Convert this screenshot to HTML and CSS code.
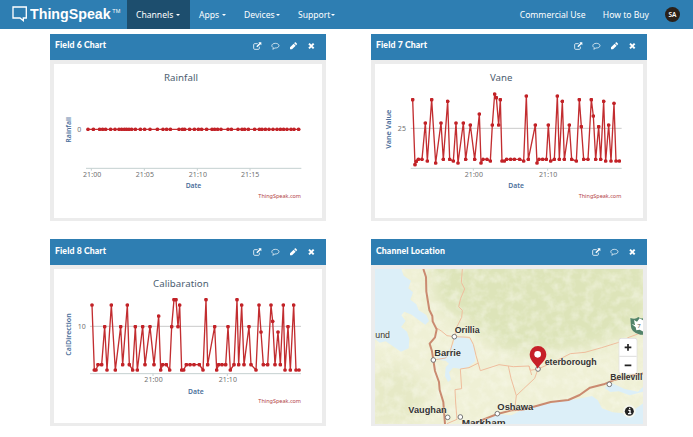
FILE: index.html
```html
<!DOCTYPE html>
<html lang="en">
<head>
<meta charset="utf-8">
<title>ThingSpeak</title>
<link rel="stylesheet" href="styles.css">
</head>
<body>
<svg class="defs" width="0" height="0" aria-hidden="true">
  <symbol id="i-open" viewBox="0 0 27 24"><path d="M14 5H5Q2 5 2 8V19Q2 22 5 22H16Q19 22 19 19V14" fill="none" stroke="#fff" stroke-width="2.4"/><path d="M16 1H25V10L22 7L13 16L10 13L19 4Z" fill="#fff"/></symbol>
  <symbol id="i-talk" viewBox="0 0 27 24"><path d="M13 4C7 4 2.500 7 2.500 11C2.500 13.500 4 15.500 7 17C7 19 6 20.500 5 21.500C8 21 10 20 11.500 18C18 18.500 24 15.500 24 11C24 7 19 4 13 4Z" fill="none" stroke="#fff" stroke-width="2.2"/></symbol>
  <symbol id="i-edit" viewBox="0 0 27 24"><path d="M3 22V16L14 5L20 11L9 22ZM15.500 3.500L18 1Q19 0 20 1L24 5Q25 6 24 7L21.500 9.500Z" fill="#fff"/></symbol>
  <symbol id="i-close" viewBox="0 0 27 24"><path d="M6 5L20 19M20 5L6 19" stroke="#fff" stroke-width="6"/></symbol>
  <marker id="dot" markerUnits="userSpaceOnUse" markerWidth="12" markerHeight="12" refX="6" refY="6"><circle cx="6" cy="6" r="5.600" fill="#c22227"/></marker>
</svg>

<nav class="navbar">
  <a class="brand">
    <svg class="brand-icon" viewBox="0 0 46 48"><path d="M3 3H43V36H34V44L24 36H3Z" fill="none" stroke="#fff" stroke-width="4"/></svg>
    <svg class="brand-word" viewBox="0 0 272 60"><text x="0" y="41" textLength="242" lengthAdjust="spacingAndGlyphs">ThingSpeak</text><text class="tm" x="247" y="24" textLength="24" lengthAdjust="spacingAndGlyphs">TM</text></svg>
  </a>
  <div class="menu">
    <a class="item active">Channels<i class="caret"></i></a>
    <a class="item apps">Apps<i class="caret"></i></a>
    <a class="item devices">Devices<i class="caret"></i></a>
    <a class="item support">Support<i class="caret"></i></a>
  </div>
  <div class="account">
    <a class="commercial">Commercial Use</a>
    <a class="buy">How to Buy</a>
    <span class="avatar">SA</span>
  </div>
</nav>

<main class="grid">
  <section class="panel">
    <header><h2>Field 6 Chart</h2><div class="tools"><svg><use href="#i-open"/></svg><svg><use href="#i-talk"/></svg><svg><use href="#i-edit"/></svg><svg><use href="#i-close"/></svg></div></header>
    <svg class="chart" viewBox="27 102 804 462">
      <text class="title" x="357" y="154" textLength="102">Rainfall</text>
      <text class="axis" transform="translate(77 338) rotate(-90)" textLength="77" lengthAdjust="spacingAndGlyphs">Rainfall</text>
      <text class="tick" x="97" y="305">0</text>
      <path class="line-axis" d="M123 415H769M139 415V422M298 415V422M457 415V422M615 415V422"/>
      <polyline class="data" points="129,298 145,298 164,298 173,298 182,298 197,298 210,298 222,298 230,298 238,298 245,298 252,298 260,298 271,298 286,298 299,298 315,298 337,298 354,298 365,298 376,298 402,298 412,298 419,298 434,298 448,298 460,298 470,298 485,298 501,298 509,298 518,298 528,298 549,298 559,298 579,298 591,298 599,298 610,298 629,298 643,298 651,298 661,298 672,298 684,298 696,298 706,298 716,298 726,298 738,298 747,298 761,298"/>
      <text class="tick" x="114" y="440" textLength="55">21:00</text><text class="tick" x="272" y="440" textLength="55">21:05</text><text class="tick" x="431" y="440" textLength="55">21:10</text><text class="tick" x="588" y="440" textLength="55">21:15</text>
      <text class="axis" x="422" y="475" textLength="47" lengthAdjust="spacingAndGlyphs">Date</text>
      <text class="credit" x="640" y="504" textLength="128" lengthAdjust="spacingAndGlyphs">ThingSpeak.com</text>
    </svg>
  </section>

  <section class="panel">
    <header><h2>Field 7 Chart</h2><div class="tools"><svg><use href="#i-open"/></svg><svg><use href="#i-talk"/></svg><svg><use href="#i-edit"/></svg><svg><use href="#i-close"/></svg></div></header>
    <svg class="chart" viewBox="30 102 804 462">
      <text class="title" x="375" y="154" textLength="67">Vane</text>
      <text class="axis" transform="translate(79 356) rotate(-90)" textLength="117" lengthAdjust="spacingAndGlyphs">Vane Value</text>
      <text class="tick" x="98" y="303" textLength="25">25</text>
      <path class="line-grid" d="M137 295H770"/>
      <path class="line-axis" d="M137 415H770M325 415V422M548 415V422"/>
      <polyline class="data" points="143,209 150,404 154,394 160,388 171,388 181,279 187,393 200,209 212,399 228,279 235,388 248,214 254,388 265,393 273,279 279,399 295,279 302,388 316,285 329,388 343,252 348,399 354,388 366,388 376,393 382,285 389,192 394,203 401,285 406,209 411,393 418,393 425,388 437,388 448,388 464,388 476,393 484,198 490,388 511,285 516,399 522,388 533,388 544,388 550,285 557,393 568,388 577,198 583,388 592,214 598,388 613,285 620,388 634,393 643,209 649,290 656,388 669,388 679,209 685,258 692,388 701,290 707,388 716,214 722,393 731,285 738,393 747,220 753,393 763,393"/>
      <text class="tick" x="299" y="440" textLength="55">21:00</text><text class="tick" x="522" y="440" textLength="55">21:10</text>
      <text class="axis" x="430" y="475" textLength="47" lengthAdjust="spacingAndGlyphs">Date</text>
      <text class="credit" x="641" y="504" textLength="128" lengthAdjust="spacingAndGlyphs">ThingSpeak.com</text>
    </svg>
  </section>

  <section class="panel lower">
    <header><h2>Field 8 Chart</h2><div class="tools"><svg><use href="#i-open"/></svg><svg><use href="#i-talk"/></svg><svg><use href="#i-edit"/></svg><svg><use href="#i-close"/></svg></div></header>
    <svg class="chart" viewBox="27 102 804 462">
      <text class="title" x="324" y="156" textLength="167">Calibaration</text>
      <text class="axis" transform="translate(77 362) rotate(-90)" textLength="127" lengthAdjust="spacingAndGlyphs">CalDirection</text>
      <text class="tick" x="98" y="282" textLength="24">10</text>
      <path class="line-grid" d="M135 274H768"/>
      <path class="line-axis" d="M135 416H768M324 416V423M547 416V423"/>
      <polyline class="data" points="141,210 148,405 153,405 159,389 170,389 179,275 186,405 199,210 211,405 227,275 233,389 247,210 253,389 263,405 271,275 277,405 293,275 300,389 315,275 327,389 341,243 347,405 353,389 364,389 374,405 380,275 387,194 393,194 399,275 404,210 410,405 416,405 424,389 435,389 447,389 463,389 474,405 483,194 488,389 509,275 515,405 521,389 531,389 542,389 549,275 556,405 567,389 576,194 581,389 590,210 597,389 612,275 618,389 633,405 642,210 648,291 655,389 668,389 678,210 683,259 690,389 699,291 706,389 715,210 720,405 729,275 736,405 746,210 753,405 762,405"/>
      <text class="tick" x="298" y="441" textLength="55">21:00</text><text class="tick" x="521" y="441" textLength="55">21:10</text>
      <text class="axis" x="429" y="476" textLength="47" lengthAdjust="spacingAndGlyphs">Date</text>
      <text class="credit" x="640" y="505" textLength="128" lengthAdjust="spacingAndGlyphs">ThingSpeak.com</text>
    </svg>
  </section>

  <section class="panel lower">
    <header><h2>Channel Location</h2><div class="tools"><svg><use href="#i-open"/></svg><svg><use href="#i-talk"/></svg><svg><use href="#i-close"/></svg></div></header>
    <svg class="chart map" viewBox="30 102 804 465" preserveAspectRatio="none">
      <defs>
        <filter id="relief" x="0" y="0" width="100%" height="100%"><feTurbulence type="fractalNoise" baseFrequency="0.035" numOctaves="3" seed="8"/><feColorMatrix values="0 0 0 0 .96  0 0 0 0 .96  0 0 0 0 .87  2.200 0 0 0 -.850"/></filter>
        <filter id="soft" x="-20%" y="-20%" width="140%" height="140%"><feGaussianBlur stdDeviation="22"/></filter>
      </defs>
      <rect x="27" y="100" width="808" height="470" fill="#eff0d5"/>
      <path d="M190 60H850V270L700 330L560 350L420 350L330 280L220 210Z" fill="#dde4b9" filter="url(#soft)"/>
      <path d="M20 400L110 390L190 460L170 560L20 570Z" fill="#e6e9c6" filter="url(#soft)"/>
      <rect x="27" y="100" width="808" height="470" filter="url(#relief)" opacity=".45"/>
      <path class="water" d="M27 100H108L116 122L138 137L130 160L144 172L136 194L154 208L161 226L184 240L192 258L181 269L160 254L140 239L118 230L109 241L122 258L108 276L126 290L133 312L131 340L108 350L84 334L62 319L44 323L27 310Z"/>
      <path class="water" d="M267 310L290 304L317 314L329 342L331 379L309 397L285 401L264 398L252 412L258 434L249 441L240 424L242 397L252 386L242 377L225 375L215 367L247 358L255 340L267 325Z"/>
      <path class="water" d="M290 570L345 554L397 537L440 541L470 525L530 510L590 499L640 491L681 483L698 495L711 520L743 532L790 536L835 505V570Z"/>
      <path class="water" d="M740 444L779 462L819 470L835 455V470L794 481L761 469L736 471L719 459Z"/>
      <g class="minor"><path d="M292 102L289 142L299 162L287 190L281 215L292 226L290 247L276 275L268 305L246 302L229 288L215 279"/><path d="M268 305L314 307L325 328L333 361L346 407L402 389L445 395L492 393L496 406L519 402"/><path d="M340 384L312 398L286 402L290 461L270 464L272 504L276 553L246 566"/><path d="M205 375L242 369L256 347L268 305M430 393L438 430L454 482L449 524M454 482L475 462L509 430L519 402L571 379L616 356L660 352L710 338L758 323L794 306L835 291M492 393L500 420"/></g>
      <path class="major" d="M175 102L183 126L184 170L193 225L202 243L203 259L215 283L210 307L194 326L201 349L205 375L210 408L222 441L224 465L235 501L237 529L240 567"/>
      <path class="major" d="M327 567L354 554L397 537L440 526L472 524L517 512L557 501L610 495L644 480L675 458L716 448L750 434L790 424L835 415"/>
      <g class="town"><circle cx="268" cy="305" r="7"/><circle cx="205" cy="375" r="7"/><circle cx="248" cy="547" r="7"/><circle cx="286" cy="546" r="7"/><circle cx="397" cy="536" r="7"/><circle cx="519" cy="402" r="7"/><circle cx="733" cy="448" r="7"/></g>
      <g class="place"><text x="31" y="308" textLength="44" lengthAdjust="spacingAndGlyphs" class="light">und</text><text x="269" y="293" textLength="75" lengthAdjust="spacingAndGlyphs">Orillia</text><text x="208" y="363" textLength="80" lengthAdjust="spacingAndGlyphs">Barrie</text><text x="130" y="534" textLength="115" lengthAdjust="spacingAndGlyphs">Vaughan</text><text x="290" y="573" textLength="132" lengthAdjust="spacingAndGlyphs">Markham</text><text x="397" y="524" textLength="108" lengthAdjust="spacingAndGlyphs">Oshawa</text><text x="539" y="391" textLength="156" lengthAdjust="spacingAndGlyphs">eterborough</text></g>
      <path d="M796 249Q812 254 820 246Q828 254 842 247V296Q832 302 822 298Q800 292 798 276Z" fill="#52836a"/><path d="M800 267L810 270L807 255L816 260L824 250L836 257V291L824 284L814 286L812 277Z" fill="#fff"/><text x="817" y="280" class="route">7</text>
      <path d="M518 401C510 386 494 377 494 358A25 25 0 0 1 544 358C544 377 526 386 518 401Z" fill="#c61f28"/><circle cx="518" cy="358" r="10" fill="#fff"/>
      <rect x="761" y="309" width="56" height="109" rx="8" fill="#ddd"/><rect x="763" y="311" width="52" height="105" rx="6" fill="#fff"/><path d="M763 364H815" stroke="#ddd" stroke-width="3"/><path d="M779 337H799M789 327V347M779 391H799" stroke="#222" stroke-width="5"/>
      <g class="place"><text x="736" y="436" textLength="96" lengthAdjust="spacingAndGlyphs">Bellevill</text></g>
      <circle cx="793" cy="529" r="19" fill="#f5f7ef"/><circle cx="793" cy="529" r="13.500" fill="#222"/><path d="M790 526H795V536M789 536H799M792 520H796" fill="none" stroke="#fff" stroke-width="4"/>
    </svg>
  </section>
</main>
</body>
</html>
```
FILE: styles.css
```css
* { box-sizing: border-box; }
body { margin: 0; background: #fff; width: 693px; height: 437px; overflow: hidden; font-family: "Noto Sans", "Open Sans", sans-serif; }
.defs { position: absolute; }
.navbar { display: flex; height: 29px; background: #2e7eb2; color: #fff; font-size: 8.6px; }
.brand { display: flex; width: 127px; padding-left: 12px; }
.brand-icon { width: 15.300px; height: 16px; margin-top: 6px; }
.brand-word { width: 90.700px; height: 20px; margin: 4.500px 0 0 2.700px; fill: #fff; font: bold 43px "Liberation Sans", sans-serif; }
.brand-word .tm { font-size: 17px; font-weight: normal; }
.menu { display: flex; }
.item { display: flex; align-items: center; height: 29px; white-space: nowrap; }
.active { width: 63px; padding-left: 9px; background: #1d4e6e; }
.apps { width: 45px; padding-left: 9px; }
.devices { width: 54px; padding-left: 9px; }
.support { width: 50px; padding-left: 9px; }
.caret { border: 2.600px solid transparent; border-top-color: #fff; border-bottom: 0; margin: 1px 0 0 3px; }
.devices .caret, .support .caret { margin-left: 1px; }
.account { display: flex; align-items: center; margin-left: auto; padding-right: 13px; white-space: nowrap; }
.buy { margin-left: 17.300px; }
.avatar { width: 15px; height: 15px; margin-left: 16px; border-radius: 50%; background: #2b2119; font-size: 6.500px; font-weight: 600; line-height: 15px; text-align: center; }
.grid { display: grid; grid-template-columns: 276px 276px; gap: 18px 45px; padding: 5px 0 0 50px; }
.panel { height: 187px; background: #ececec; }
.panel header { display: flex; justify-content: space-between; height: 26px; background: #2e7eb2; padding: 0 10px 0 5px; }
.panel h2 { margin: 0; color: #fff; font: 900 8.700px/22px Lato, sans-serif; letter-spacing: .1px; }
.lower h2 { line-height: 24px; }
.tools { display: flex; gap: 9px; padding-top: 7.500px; }
.lower .tools { padding-top: 8.500px; }
.tools svg { width: 9px; height: 8px; }
.chart { display: block; width: 268px; height: 154px; margin: 4px 0 0 4px; background: #fff; }
.chart.map { height: 155px; }
.chart text { font-family: "Noto Sans", "Open Sans", sans-serif; }
.chart .title { font-size: 29px; fill: #4c5d70; }
.chart .axis { font-size: 22px; font-weight: 600; fill: #4b6f9b; }
.chart .tick { font-size: 21px; fill: #707070; }
.chart .credit { font-size: 17px; fill: #b34246; }
.line-axis, .line-grid { fill: none; stroke: #c5d0d0; stroke-width: 3; }
.line-grid { stroke: #cbcbcb; }
.data { fill: none; stroke: #c22d30; stroke-width: 4; stroke-linejoin: round; marker-start: url(#dot); marker-mid: url(#dot); marker-end: url(#dot); }
.water { fill: #dceff8; }
.minor path { fill: none; stroke: #efbd9d; stroke-width: 3; stroke-linejoin: round; }
.major { fill: none; stroke: #ca8a70; stroke-width: 6; stroke-linejoin: round; }
.town circle { fill: #fff; stroke: #777; stroke-width: 3; }
.chart .place text { font: bold 27px "Liberation Sans", sans-serif; fill: #333; stroke: #f8f8e9; stroke-width: 2; paint-order: stroke; }
.chart .place .light { font-weight: normal; }
.chart .route { font-size: 18px; fill: #555; }
```
